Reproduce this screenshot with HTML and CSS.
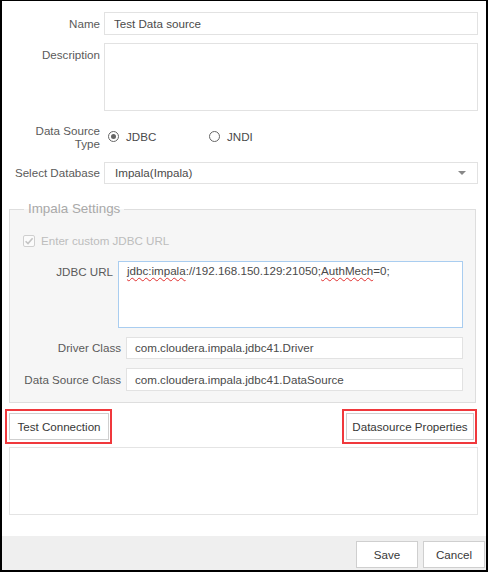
FILE: index.html
```html
<!DOCTYPE html>
<html>
<head>
<meta charset="utf-8">
<link rel="stylesheet" href="styles.css">
</head>
<body>
<div class="dialog">
  <div class="form">
    <div class="row row-name">
      <div class="label">Name</div>
      <div class="field field-text">Test Data source</div>
    </div>
    <div class="row row-desc">
      <div class="label label-top">Description</div>
      <div class="field field-area"></div>
    </div>
    <div class="row row-type">
      <div class="label label-two">Data Source<br>Type</div>
      <div class="radios">
        <div class="radio-opt"><span class="radio checked"></span><span>JDBC</span></div>
        <div class="radio-opt"><span class="radio"></span><span>JNDI</span></div>
      </div>
    </div>
    <div class="row row-select">
      <div class="label">Select Database</div>
      <div class="field field-select"><span>Impala(Impala)</span><span class="caret"></span></div>
    </div>

    <fieldset class="settings">
      <legend>Impala Settings</legend>
      <div class="check-row">
        <svg class="checkbox" width="12" height="12" viewBox="0 0 12 12">
          <rect x="0.5" y="0.5" width="11" height="11" rx="1.5" fill="#fbfbfb" stroke="#cfcfcf"/>
          <path d="M2.6 6.2 L5 8.6 L9.6 3.2" fill="none" stroke="#c4c4c4" stroke-width="1.6"/>
        </svg>
        <span>Enter custom JDBC URL</span>
      </div>
      <div class="srow srow-url">
        <div class="label label-url">JDBC URL</div>
        <div class="field field-url"><span class="spell">jdbc:impala</span>://192.168.150.129:21050;<span class="spell">AuthMech</span>=0;</div>
      </div>
      <div class="srow srow-driver">
        <div class="label">Driver Class</div>
        <div class="field field-cls">com.cloudera.impala.jdbc41.Driver</div>
      </div>
      <div class="srow srow-ds">
        <div class="label">Data Source Class</div>
        <div class="field field-cls field-cls2">com.cloudera.impala.jdbc41.DataSource</div>
      </div>
    </fieldset>

    <div class="btn-row">
      <div class="mark mark-left"><button class="btn btn-test">Test Connection</button></div>
      <div class="mark mark-right"><button class="btn btn-props">Datasource Properties</button></div>
    </div>
    <div class="result"></div>
  </div>
  <div class="footer">
    <button class="btn btn-foot">Save</button>
    <button class="btn btn-foot">Cancel</button>
  </div>
</div>
</body>
</html>
```
FILE: styles.css
```css
* { box-sizing: border-box; }
html, body { margin: 0; padding: 0; }
body {
  font-family: "Liberation Sans", Arial, sans-serif;
  font-size: 11.6px;
  color: #5a5a5a;
  background: #fff;
}
.dialog {
  height: 572px;
  border: 2px solid #000;
  border-top-width: 1px;
  display: flex;
  flex-direction: column;
}
.form {
  padding: 11px 8px 0 7px;
  display: flex;
  flex-direction: column;
}
.row {
  display: grid;
  grid-template-columns: 91px 1fr;
  column-gap: 4px;
}
.label {
  text-align: right;
  color: #5a5a5a;
  white-space: nowrap;
}
.field {
  border: 1px solid #e2e2e2;
  background: #fff;
  color: #4a4a4a;
}
.row-name .label { line-height: 23px; }
.field-text { height: 23px; line-height: 21px; padding-left: 9px; }
.row-desc { margin-top: 8px; }
.label-top { padding-top: 5px; line-height: 14px; }
.field-area { height: 68px; }
.row-type { margin-top: 13px; }
.label-two { line-height: 13px; }
.radios { display: flex; margin-left: 4px; margin-top: 6px; align-items: flex-start; }
.radio-opt { width: 101px; display: flex; align-items: center; gap: 7px; line-height: 13px; color: #4a4a4a; }
.radio {
  width: 11px; height: 11px;
  border: 1px solid #666;
  border-radius: 50%;
  display: flex; align-items: center; justify-content: center;
}
.radio.checked::after {
  content: "";
  width: 5px; height: 5px;
  border-radius: 50%;
  background: #666;
}
.row-select { margin-top: 12px; }
.row-select .label { line-height: 22px; }
.field-select {
  height: 22px;
  line-height: 20px;
  padding: 0 11px 0 10px;
  display: flex;
  justify-content: space-between;
  align-items: center;
}
.caret {
  width: 0; height: 0;
  border-left: 4px solid transparent;
  border-right: 4px solid transparent;
  border-top: 4px solid #888;
}
.settings {
  margin: 17px 2px 0 0;
  padding: 17px 12px 11px 9px;
  border: 1px solid #dedede;
  background: #f6f6f6;
  min-width: 0;
}
.settings legend {
  font-size: 13.4px;
  line-height: 16px;
  color: #a9a9a9;
  padding: 0 4px;
  margin-left: 5px;
}
.check-row {
  display: flex;
  align-items: center;
  gap: 6px;
  margin-left: 4px;
  line-height: 14px;
  height: 14px;
  color: #bdbdbd;
}
.checkbox { display: block; }
.srow {
  display: grid;
  grid-template-columns: 102px 1fr;
  column-gap: 5px;
}
.srow-url { margin-top: 13px; }
.label-url { padding-top: 4px; line-height: 14px; margin-right: 8px; }
.field-url {
  margin-left: -8px;
  height: 67px;
  border-color: #a9cdf0;
  padding: 2px 8px;
  line-height: 14px;
  color: #4a4a4a;
}
.spell {
  text-decoration: underline wavy #e03030;
  text-decoration-thickness: 1px;
  text-underline-offset: 2px;
}
.srow-driver { margin-top: 9px; }
.srow-driver .label { line-height: 22px; }
.field-cls { height: 22px; line-height: 20px; padding-left: 8px; }
.srow-ds { margin-top: 9px; }
.srow-ds .label { line-height: 23px; }
.field-cls2 { height: 23px; line-height: 21px; }
.btn-row {
  margin-top: 6px;
  display: flex;
  justify-content: space-between;
}
.mark {
  border: 2px solid #f0383c;
  padding: 2px 1px 2px 2px;
}
.mark-left { margin-left: -4px; }
.mark-right { margin-right: 1px; }
.btn {
  font-family: "Liberation Sans", Arial, sans-serif;
  font-size: 11.6px;
  color: #383838;
  background: #fff;
  border: 1px solid #cfcfcf;
  border-radius: 0;
  padding: 0;
  margin: 0;
  display: block;
}
.btn-test { width: 100px; height: 27px; }
.btn-props { width: 128px; height: 27px; }
.result {
  margin-top: 3px;
  height: 68px;
  border: 1px solid #e4e4e4;
}
.footer {
  margin-top: auto;
  height: 34px;
  background: #efefef;
  display: flex;
  justify-content: flex-end;
  gap: 5px;
  padding: 5px 1px 0 0;
}
.btn-foot { width: 62px; height: 27px; }
```
